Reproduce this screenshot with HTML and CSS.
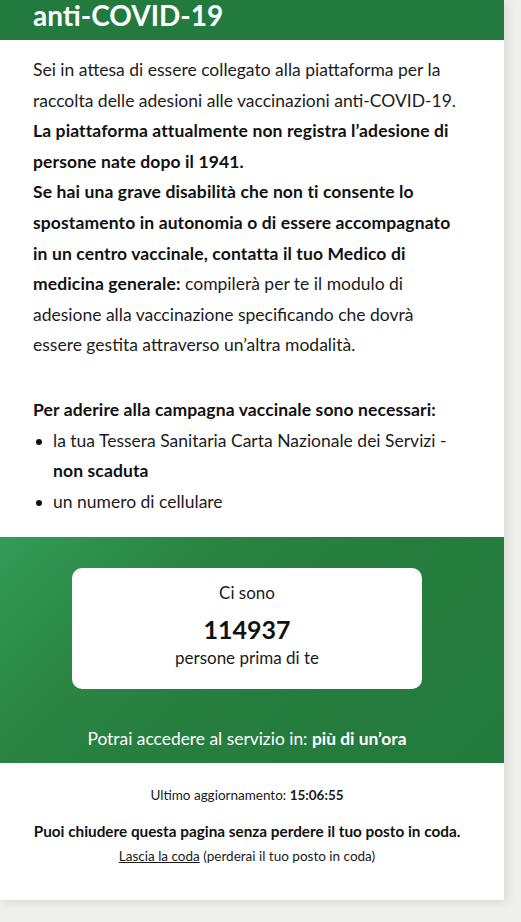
FILE: index.html
```html
<!DOCTYPE html>
<html lang="it">
<head>
<meta charset="utf-8">
<title>Coda vaccinazione anti-COVID-19</title>
<link rel="stylesheet" href="styles.css">
</head>
<body>
<div class="page">
  <header class="topbar">
    <h1 class="title">anti-COVID-19</h1>
  </header>

  <section class="intro">
    <p class="lead">Sei in attesa di essere collegato alla piattaforma per la raccolta delle adesioni alle vaccinazioni anti-COVID-19.<br><strong>La piattaforma attualmente non registra l’adesione di persone nate dopo il 1941.</strong><br><strong>Se hai una grave disabilità che non ti consente lo spostamento in autonomia o di essere accompagnato in un centro vaccinale, contatta il tuo Medico di medicina generale:</strong> compilerà per te il modulo di adesione alla vaccinazione specificando che dovrà essere gestita attraverso un’altra modalità.</p>

    <p class="req-title"><strong>Per aderire alla campagna vaccinale sono necessari:</strong></p>
    <ul class="req-list">
      <li class="req-item"><span class="bullet"></span><span>la tua Tessera Sanitaria Carta Nazionale dei Servizi - <strong>non scaduta</strong></span></li>
      <li class="req-item"><span class="bullet"></span><span>un numero di cellulare</span></li>
    </ul>
  </section>

  <section class="queue">
    <div class="queue-card">
      <div class="queue-label">Ci sono</div>
      <div class="queue-count">114937</div>
      <div class="queue-sub">persone prima di te</div>
    </div>
    <p class="eta">Potrai accedere al servizio in: <strong>più di un’ora</strong></p>
  </section>

  <footer class="foot">
    <p class="updated">Ultimo aggiornamento: <strong>15:06:55</strong></p>
    <p class="close-note">Puoi chiudere questa pagina senza perdere il tuo posto in coda.</p>
    <p class="leave"><a class="leave-link" href="#">Lascia la coda</a> (perderai il tuo posto in coda)</p>
  </footer>
</div>
</body>
</html>
```

FILE: styles.css
```css
html, body {
  margin: 0;
  padding: 0;
}

body {
  background: #efefeb;
  font-family: Lato, "Open Sans", sans-serif;
  color: #1a1a1a;
  min-height: 922px;
}

.page {
  width: 504px;
  background: #ffffff;
  box-shadow: 2px 2px 10px rgba(0, 0, 0, 0.10);
}

.topbar {
  background: #237a3e;
  padding: 0 43px 10px 33px;
}

.title {
  margin: 0;
  font-size: 28px;
  line-height: 30px;
  font-weight: 700;
  color: #ffffff;
}

.intro {
  padding: 15px 43px 20px 33px;
  font-size: 17.5px;
  line-height: 30.6px;
  color: #1c1c1c;
}

.intro strong {
  letter-spacing: 0.12px;
  color: #111;
}

.intro p {
  margin: 0;
}

.lead {
  margin-bottom: 34px !important;
}

.req-list {
  list-style: none;
  margin: 0;
  padding: 0;
}

.req-item {
  display: flex;
  align-items: flex-start;
  gap: 11px;
}

.bullet {
  flex: none;
  width: 6px;
  height: 6px;
  margin: 13px 0 0 3px;
  border-radius: 50%;
  background: #111;
}

.queue {
  background: linear-gradient(135deg, #349b58 0%, #2a8543 28%, #257d3e 55%, #237a3d 100%);
  padding: 31px 43px 11px 33px;
  display: flex;
  flex-direction: column;
  align-items: center;
}

.queue-card {
  width: 350px;
  background: #ffffff;
  border-radius: 10px;
  padding: 13px 0 19px;
  text-align: center;
}

.queue-label, .queue-sub {
  font-size: 17px;
  line-height: 24px;
}

.queue-count {
  margin-top: 7px;
  font-size: 25px;
  line-height: 34px;
  font-weight: 700;
  color: #111;
}

.eta {
  margin: 37px 0 0;
  color: #ffffff;
  font-size: 17.4px;
  line-height: 26px;
}

.foot {
  padding: 22px 43px 34px 33px;
  text-align: center;
}

.foot p {
  margin: 0;
}

.updated {
  font-size: 13.5px;
  line-height: 20px;
}

.close-note {
  margin-top: 15px !important;
  font-size: 15.3px;
  line-height: 22px;
  font-weight: 700;
  color: #111;
}

.leave {
  margin-top: 4px !important;
  font-size: 13.5px;
  line-height: 20px;
}

.leave-link {
  color: #1a1a1a;
  text-decoration: underline;
}
```
